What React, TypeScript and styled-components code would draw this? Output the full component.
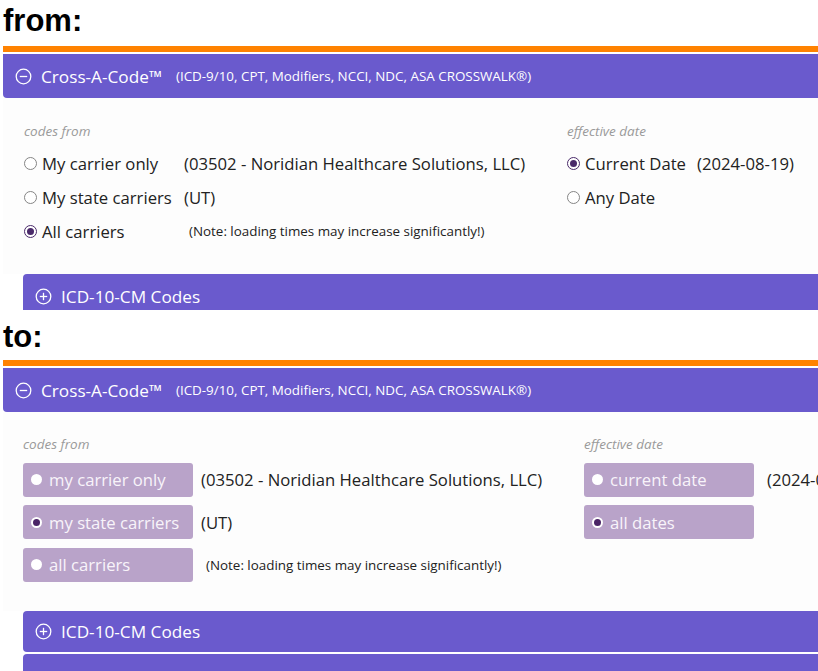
import styled, { createGlobalStyle } from "styled-components";

const GlobalStyle = createGlobalStyle`
  html, body {
    margin: 0;
    padding: 0;
    background: #ffffff;
    overflow: hidden;
  }
  body {
    font-family: "Open Sans", "Noto Sans", sans-serif;
    color: #222222;
  }
`;

type Variant = "plain" | "boxed";

const StyledPage = styled.div`
  display: flex;
  flex-direction: column;
  width: 818px;
  overflow: hidden;
`;

const StyledShot = styled.div<{ clip?: number }>`
  display: flex;
  flex-direction: column;
  flex-shrink: 0;
  height: ${(props) => (props.clip ? `${props.clip}px` : "auto")};
  overflow: hidden;
  & > * {
    flex-shrink: 0;
  }
`;

const StyledCaption = styled.div<{ top: number; height: number }>`
  box-sizing: border-box;
  height: ${(props) => props.height}px;
  padding: ${(props) => props.top}px 0 0 3px;
  font-family: "Liberation Sans", Arial, sans-serif;
  font-weight: 700;
  font-size: 31px;
  line-height: 36px;
  color: #000000;
`;

const StyledPanel = styled.section`
  margin-left: 3px;
  width: 1000px;
  border-top: 6px solid #ff8200;
  padding-top: 2px;
`;

const StyledHeader = styled.div`
  display: flex;
  align-items: center;
  height: 44px;
  padding-left: 12px;
  background: #6a5acd;
  border-radius: 0 0 0 4px;
  color: #ffffff;
`;

const StyledHeaderTitle = styled.span`
  margin-left: 9px;
  font-size: 17.2px;
`;

const StyledHeaderNote = styled.span`
  margin-left: 14px;
  font-size: 13.4px;
`;

const StyledBody = styled.div<{ variant: Variant }>`
  display: grid;
  grid-template-columns: ${(props) =>
    props.variant === "plain" ? "543px auto" : "561px auto"};
  padding: ${(props) =>
    props.variant === "plain" ? "25px 0 26px 21px" : "24px 0 29px 20px"};
  background: #fdfdfd;
`;

const StyledColumn = styled.div<{ variant: Variant }>`
  display: flex;
  flex-direction: column;
  gap: ${(props) => (props.variant === "plain" ? "0" : "8.5px")};
`;

const StyledColumnLabel = styled.div<{ variant: Variant }>`
  height: 16px;
  margin-bottom: ${(props) => (props.variant === "plain" ? "7px" : "2px")};
  font-size: 13.5px;
  line-height: 16px;
  font-style: italic;
  color: #9a9a9a;
`;

const StyledRow = styled.div`
  display: flex;
  align-items: center;
  height: 34px;
`;

const StyledOption = styled.div<{ variant: Variant; width: number }>`
  box-sizing: border-box;
  display: flex;
  align-items: center;
  gap: ${(props) => (props.variant === "plain" ? "5px" : "7px")};
  width: ${(props) => props.width}px;
  height: 34px;
  padding-left: ${(props) => (props.variant === "plain" ? "0" : "8px")};
  border-radius: 3px;
  background: ${(props) => (props.variant === "plain" ? "transparent" : "#b9a3c9")};
  color: ${(props) => (props.variant === "plain" ? "#222222" : "#f8f4fa")};
  font-size: 16.7px;
  white-space: nowrap;
`;

const StyledPlainRadio = styled.span<{ checked?: boolean }>`
  box-sizing: border-box;
  display: inline-flex;
  flex-shrink: 0;
  align-items: center;
  justify-content: center;
  width: 13px;
  height: 13px;
  border-radius: 50%;
  border: 1px solid ${(props) => (props.checked ? "#4a2a6a" : "#858585")};
  background: #ffffff;
  &::after {
    content: "";
    width: 7px;
    height: 7px;
    border-radius: 50%;
    background: ${(props) => (props.checked ? "#4a2a6a" : "transparent")};
  }
`;

const StyledBoxRadio = styled.span<{ checked?: boolean }>`
  box-sizing: border-box;
  display: inline-flex;
  flex-shrink: 0;
  align-items: center;
  justify-content: center;
  width: 11px;
  height: 11px;
  border-radius: 50%;
  background: #ffffff;
  &::after {
    content: "";
    width: 7px;
    height: 7px;
    border-radius: 50%;
    background: ${(props) => (props.checked ? "#4a2466" : "transparent")};
  }
`;

const StyledDetail = styled.span<{ gap: number; small?: boolean }>`
  margin-left: ${(props) => props.gap}px;
  font-size: ${(props) => (props.small ? "13.4px" : "16.7px")};
  white-space: nowrap;
`;

const StyledSubHeader = styled.div<{ variant: Variant }>`
  display: flex;
  align-items: center;
  height: ${(props) => (props.variant === "plain" ? "44px" : "41px")};
  margin-left: 20px;
  padding-left: 12px;
  background: #6a5acd;
  border-radius: 4px 0 0 4px;
  color: #ffffff;
`;

const StyledNextBar = styled.div`
  height: 30px;
  margin: 2px 0 0 20px;
  background: #6a5acd;
  border-radius: 4px 0 0 0;
`;

function CircleIcon({ plus }: { plus?: boolean }) {
  return (
    <svg width="17" height="17" viewBox="0 0 17 17" fill="none">
      <circle cx="8.5" cy="8.5" r="7.3" stroke="#ffffff" strokeWidth="1.3" />
      <line x1="4.8" y1="8.5" x2="12.2" y2="8.5" stroke="#ffffff" strokeWidth="1.3" />
      {plus && (
        <line x1="8.5" y1="4.8" x2="8.5" y2="12.2" stroke="#ffffff" strokeWidth="1.3" />
      )}
    </svg>
  );
}

type OptionDef = {
  label: string;
  checked?: boolean;
  detail?: string;
  small?: boolean;
};

type ShotProps = {
  caption: string;
  captionTop: number;
  captionHeight: number;
  clip?: number;
  variant: Variant;
  codes: OptionDef[];
  dates: OptionDef[];
};

function OptionRow({
  option,
  variant,
  width,
  gap,
}: {
  option: OptionDef;
  variant: Variant;
  width: number;
  gap: number;
}) {
  return (
    <StyledRow>
      <StyledOption variant={variant} width={width}>
        {variant === "plain" ? (
          <StyledPlainRadio checked={option.checked} />
        ) : (
          <StyledBoxRadio checked={option.checked} />
        )}
        {option.label}
      </StyledOption>
      {option.detail && (
        <StyledDetail gap={option.small ? gap + 5 : gap} small={option.small}>
          {option.detail}
        </StyledDetail>
      )}
    </StyledRow>
  );
}

function Shot({
  caption,
  captionTop,
  captionHeight,
  clip,
  variant,
  codes,
  dates,
}: ShotProps) {
  const plain = variant === "plain";
  return (
    <StyledShot clip={clip}>
      <StyledCaption top={captionTop} height={captionHeight}>
        {caption}
      </StyledCaption>
      <StyledPanel>
        <StyledHeader>
          <CircleIcon />
          <StyledHeaderTitle>Cross-A-Code™</StyledHeaderTitle>
          <StyledHeaderNote>
            (ICD-9/10, CPT, Modifiers, NCCI, NDC, ASA CROSSWALK®)
          </StyledHeaderNote>
        </StyledHeader>
        <StyledBody variant={variant}>
          <StyledColumn variant={variant}>
            <StyledColumnLabel variant={variant}>codes from</StyledColumnLabel>
            {codes.map((option) => (
              <OptionRow
                key={option.label}
                option={option}
                variant={variant}
                width={plain ? 160 : 170}
                gap={plain ? 0 : 8}
              />
            ))}
          </StyledColumn>
          <StyledColumn variant={variant}>
            <StyledColumnLabel variant={variant}>
              effective date
            </StyledColumnLabel>
            {dates.map((option) => (
              <OptionRow
                key={option.label}
                option={option}
                variant={variant}
                width={plain ? 130 : 170}
                gap={plain ? 0 : 13}
              />
            ))}
          </StyledColumn>
        </StyledBody>
        <StyledSubHeader variant={variant}>
          <CircleIcon plus />
          <StyledHeaderTitle>ICD-10-CM Codes</StyledHeaderTitle>
        </StyledSubHeader>
        {!plain && <StyledNextBar />}
      </StyledPanel>
    </StyledShot>
  );
}

export default function App() {
  return (
    <>
      <GlobalStyle />
      <StyledPage>
        <Shot
          caption="from:"
          captionTop={3}
          captionHeight={46}
          clip={310}
          variant="plain"
          codes={[
            {
              label: "My carrier only",
              detail: "(03502 - Noridian Healthcare Solutions, LLC)",
            },
            { label: "My state carriers", detail: "(UT)" },
            {
              label: "All carriers",
              checked: true,
              detail: "(Note: loading times may increase significantly!)",
              small: true,
            },
          ]}
          dates={[
            { label: "Current Date", checked: true, detail: "(2024-08-19)" },
            { label: "Any Date" },
          ]}
        />
        <Shot
          caption="to:"
          captionTop={9}
          captionHeight={50}
          variant="boxed"
          codes={[
            {
              label: "my carrier only",
              detail: "(03502 - Noridian Healthcare Solutions, LLC)",
            },
            { label: "my state carriers", checked: true, detail: "(UT)" },
            {
              label: "all carriers",
              detail: "(Note: loading times may increase significantly!)",
              small: true,
            },
          ]}
          dates={[
            { label: "current date", detail: "(2024-08-19)" },
            { label: "all dates", checked: true },
          ]}
        />
      </StyledPage>
    </>
  );
}
